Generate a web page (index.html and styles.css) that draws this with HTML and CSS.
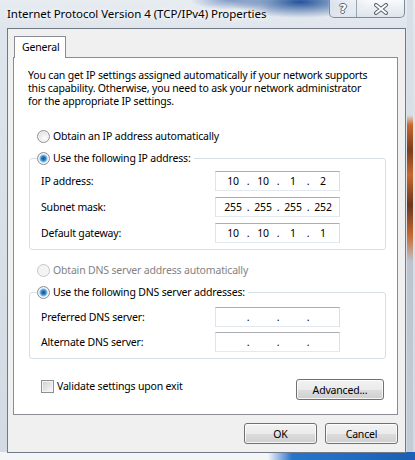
FILE: index.html
```html
<!DOCTYPE html>
<html lang="en">

<head>
    <meta charset="UTF-8">
    <title>Internet Protocol Version 4 (TCP/IPv4) Properties</title>
    <link rel="stylesheet" href="styles.css">
</head>

<body>
    <div class="window">
        <!-- 标题栏 -->
        <div class="titlebar">
            <span class="title">Internet Protocol Version 4 (TCP/IPv4) Properties</span>
            <div class="caption">
                <span class="cbtn help">?</span>
                <span class="cbtn close">
                    <svg width="16" height="12" viewBox="0 0 16 12">
                        <path d="M3 2 L13 10 M13 2 L3 10" stroke="#5b6470" stroke-width="4" stroke-linecap="round" />
                        <path d="M3 2 L13 10 M13 2 L3 10" stroke="#fff" stroke-width="2" stroke-linecap="round" />
                    </svg>
                </span>
            </div>
        </div>

        <!-- 客户区 -->
        <div class="client">
            <div class="tabs">
                <span class="tab">General</span>
            </div>
            <div class="panel">
                <p class="intro">You can get IP settings assigned automatically if your network supports<br>this capability. Otherwise, you need to ask your network administrator<br>for the appropriate IP settings.</p>

                <div class="radio radio-auto"><span class="mark"></span>Obtain an IP address automatically</div>

                <fieldset class="group group-ip">
                    <legend class="radio"><span class="mark checked"></span>Use the following IP address:</legend>
                    <div class="rows">
                        <span class="lbl">IP address:</span>
                        <div class="ipbox"><span>10</span><i>.</i><span>10</span><i>.</i><span>1</span><i>.</i><span>2</span></div>
                        <span class="lbl">Subnet mask:</span>
                        <div class="ipbox"><span>255</span><i>.</i><span>255</span><i>.</i><span>255</span><i>.</i><span>252</span></div>
                        <span class="lbl">Default gateway:</span>
                        <div class="ipbox"><span>10</span><i>.</i><span>10</span><i>.</i><span>1</span><i>.</i><span>1</span></div>
                    </div>
                </fieldset>

                <div class="radio radio-dns disabled"><span class="mark"></span>Obtain DNS server address automatically</div>

                <fieldset class="group group-dns">
                    <legend class="radio"><span class="mark checked"></span>Use the following DNS server addresses:</legend>
                    <div class="rows">
                        <span class="lbl">Preferred DNS server:</span>
                        <div class="ipbox"><span></span><i>.</i><span></span><i>.</i><span></span><i>.</i><span></span></div>
                        <span class="lbl">Alternate DNS server:</span>
                        <div class="ipbox"><span></span><i>.</i><span></span><i>.</i><span></span><i>.</i><span></span></div>
                    </div>
                </fieldset>

                <div class="panel-foot">
                    <div class="check"><span class="box"></span>Validate settings upon exit</div>
                    <span class="btn btn-adv">Advanced...</span>
                </div>
            </div>

            <div class="dlg-buttons">
                <span class="btn">OK</span>
                <span class="btn">Cancel</span>
            </div>
        </div>
    </div>
</body>

</html>
```

FILE: styles.css
```css
* {
    box-sizing: border-box;
}

body {
    margin: 0;
    font-family: "Noto Sans", sans-serif;
    font-size: 10.5px;
    letter-spacing: -0.18px;
    color: #000;
    background: #fff;
}

.window {
    width: 415px;
    height: 460px;
    overflow: hidden;
    display: flex;
    flex-direction: column;
    background:
        radial-gradient(ellipse 70px 16px at 300px 2px, rgba(25, 75, 150, 0.95), rgba(25, 75, 150, 0)),
        radial-gradient(ellipse 40px 10px at 230px 0, rgba(60, 100, 170, 0.6), rgba(60, 100, 170, 0)),
        linear-gradient(to right, #f3f5f7 0, #f3f5f7 268px, #2a74cc 292px, #1b5fb6 100%) left bottom / 100% 8px no-repeat,
        linear-gradient(to bottom, #d9dfe6 0, #d9dfe6 115px, #c8672c 125px, #7b3c1d 150px, #c8672c 175px, #6a3520 205px, #c8672c 235px, #bcc5cf 262px, #c4ccd6 100%) 407px 0 / 6px 100% no-repeat,
        linear-gradient(to bottom, #e7ecf1 0, #dfe5ec 30px, #d3dae3 100%);
}

/* 标题栏 */
.titlebar {
    height: 28px;
    display: flex;
    justify-content: space-between;
    align-items: flex-start;
}

.title {
    padding: 6px 0 0 7px;
    font-size: 11.5px;
    letter-spacing: -0.05px;
    line-height: 16px;
    color: #000;
    text-shadow: 0 0 6px #fff, 0 0 6px #fff;
}

.caption {
    display: flex;
    margin-right: 10px;
    height: 18px;
    border: 1px solid #7f8b98;
    border-top: none;
    border-radius: 0 0 5px 5px;
    overflow: hidden;
    background: linear-gradient(to bottom, rgba(255, 255, 255, 0.75), rgba(220, 228, 236, 0.85));
    box-shadow: 0 0 1px rgba(255, 255, 255, 0.9);
}

.cbtn {
    display: flex;
    align-items: center;
    justify-content: center;
    height: 17px;
}

.help {
    width: 27px;
    border-right: 1px solid #9aa5b1;
    font-family: "DejaVu Sans", sans-serif;
    font-weight: bold;
    font-size: 13px;
    color: #fff;
    text-shadow: 1px 0 0 #5b6470, -1px 0 0 #5b6470, 0 1px 0 #5b6470, 0 -1px 0 #5b6470;
}

.close {
    width: 47px;
}

/* 客户区 */
.client {
    flex: 1;
    margin: 0 9px 7px 7px;
    background: #f0f0f0;
    border: 1px solid #6f7a86;
    padding: 7px 7px 8px 5px;
    display: flex;
    flex-direction: column;
}

.tabs {
    display: flex;
    padding-left: 1px;
    position: relative;
    z-index: 1;
    margin-bottom: -1px;
}

.tab {
    width: 52px;
    height: 22px;
    padding: 3px 0 0 7px;
    line-height: 14px;
    background: #fff;
    border: 1px solid #898c95;
    border-bottom: none;
}

.panel {
    height: 358px;
    background: #fff;
    border: 1px solid #898c95;
    padding: 11px 11px 0 14px;
}

.intro {
    margin: 0;
    line-height: 13px;
    white-space: nowrap;
}

.radio {
    display: flex;
    align-items: center;
    height: 13px;
    line-height: 13px;
}

.radio-auto {
    margin: 22px 0 0 9px;
}

.mark {
    width: 13px;
    height: 13px;
    margin-right: 3px;
    border-radius: 50%;
    border: 1px solid #8e8f8f;
    background: radial-gradient(circle at 60% 65%, #fdfdfd 0, #ececec 45%, #c9cbce 100%);
    box-shadow: inset 0 0 0 1px #f6f6f6;
}

.mark.checked {
    background:
        radial-gradient(circle, #1f4f8a 0, #2f7bc0 2px, #7cc3ea 3.5px, #b6def4 4px, rgba(255, 255, 255, 0) 4.5px),
        radial-gradient(circle at 60% 65%, #fdfdfd 0, #ececec 45%, #c9cbce 100%);
}

.disabled {
    color: #838383;
}

.disabled .mark {
    border-color: #c4c6c8;
    background: #f4f4f4;
    box-shadow: none;
}

.group {
    margin: 9px 0 0 1px;
    width: 357px;
    border: 1px solid #d5dfe5;
    border-radius: 3px;
    padding: 0 0 0 7px;
}

.group legend {
    padding: 0 3px 0 0;
}

.rows {
    display: grid;
    grid-template-columns: 1fr 125px;
    align-items: center;
    margin: 6px 45px 0 4px;
    row-gap: 6px;
}

.group-ip .rows {
    padding-bottom: 6px;
}

.group-dns .rows {
    margin-top: 8px;
    row-gap: 5px;
    padding-bottom: 6px;
}

.ipbox {
    height: 20px;
    border: 1px solid;
    border-color: #abadb3 #dbdfe6 #e3e9ef #e2e3ea;
    background: #fff;
    display: flex;
    align-items: center;
    padding-left: 5px;
    line-height: 16px;
}

.ipbox span {
    width: 24px;
    text-align: center;
}

.ipbox i {
    width: 6px;
    font-style: normal;
    text-align: center;
}

.radio-dns {
    margin: 14px 0 0 9px;
}

.panel-foot {
    display: flex;
    justify-content: space-between;
    align-items: center;
    margin: 13px 2px 0 13px;
}

.check {
    display: flex;
    align-items: center;
    line-height: 13px;
}

.box {
    width: 13px;
    height: 13px;
    margin-right: 3px;
    border: 1px solid #8e8f8f;
    background: linear-gradient(135deg, #cbcfd5 0, #eceef0 70%, #f8f8f8 100%);
    box-shadow: inset 0 0 0 1px #f4f4f4;
}

.btn {
    display: flex;
    align-items: center;
    justify-content: center;
    height: 21px;
    border: 1px solid #707070;
    border-radius: 3px;
    background: linear-gradient(to bottom, #f2f2f2 0, #ebebeb 50%, #dddddd 51%, #cfcfcf 100%);
    box-shadow: inset 0 0 0 1px rgba(255, 255, 255, 0.8);
}

.btn-adv {
    width: 88px;
    margin-top: 7px;
}

.dlg-buttons {
    display: flex;
    justify-content: flex-end;
    gap: 8px;
    margin-top: 8px;
}

.dlg-buttons .btn {
    width: 73px;
}
```
